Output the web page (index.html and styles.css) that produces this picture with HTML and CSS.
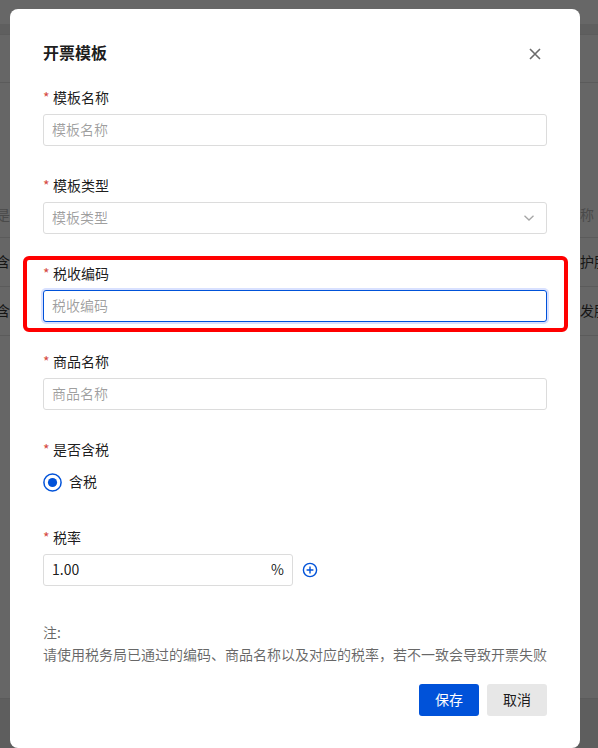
FILE: index.html
```html
<!DOCTYPE html>
<html lang="zh-CN">
<head>
<meta charset="utf-8">
<title>开票模板</title>
<link rel="stylesheet" href="styles.css">
</head>
<body>
<div class="page">
  <div class="bg-top"></div>
  <div class="bg-head"></div>
  <div class="bg-row h48"></div>
  <div class="bg-row h155"><span class="bg-l muted">是</span><span class="bg-r muted">称</span></div>
  <div class="bg-row h49"><span class="bg-l">含</span><span class="bg-r">护服</span></div>
  <div class="bg-row h49"><span class="bg-l">含</span><span class="bg-r">发服</span></div>
  <div class="bg-row h364"></div>
  <div class="bg-rest"></div>
</div>

<div class="dialog">
  <div class="dialog-header">
    <h2 class="dialog-title">开票模板</h2>
    <button class="dialog-close" aria-label="关闭">
      <svg width="12" height="12" viewBox="0 0 12 12"><path d="M1 1L11 11M11 1L1 11" stroke="#6b6b6b" stroke-width="1.6" fill="none"/></svg>
    </button>
  </div>

  <form class="form">
    <div class="form-item">
      <label class="form-label"><span class="req">*</span>模板名称</label>
      <div class="input"><span class="placeholder">模板名称</span></div>
    </div>

    <div class="form-item">
      <label class="form-label"><span class="req">*</span>模板类型</label>
      <div class="input select"><span class="placeholder">模板类型</span>
        <svg class="chevron" width="12" height="8" viewBox="0 0 12 8"><path d="M1.5 1.8L6 6L10.5 1.8" stroke="#a6a6a6" stroke-width="1.3" fill="none"/></svg>
      </div>
    </div>

    <div class="form-item highlighted">
      <label class="form-label"><span class="req">*</span>税收编码</label>
      <div class="input focused"><span class="placeholder">税收编码</span></div>
    </div>

    <div class="form-item">
      <label class="form-label"><span class="req">*</span>商品名称</label>
      <div class="input"><span class="placeholder">商品名称</span></div>
    </div>

    <div class="form-item">
      <label class="form-label"><span class="req">*</span>是否含税</label>
      <div class="radio-row">
        <span class="radio">
          <svg width="19" height="19" viewBox="0 0 19 19"><circle cx="9.5" cy="9.5" r="8.6" fill="#fff" stroke="#0052d9" stroke-width="1.5"/><circle cx="9.5" cy="9.5" r="4.6" fill="#0052d9"/></svg>
        </span>
        <span class="radio-label">含税</span>
      </div>
    </div>

    <div class="form-item last">
      <label class="form-label"><span class="req">*</span>税率</label>
      <div class="rate-row">
        <div class="input rate"><span class="value">1.00</span><span class="suffix">%</span></div>
        <svg class="add" width="16" height="16" viewBox="0 0 16 16"><circle cx="8" cy="8" r="6.6" fill="none" stroke="#0052d9" stroke-width="1.4"/><path d="M8 4.6V11.4M4.6 8H11.4" stroke="#0052d9" stroke-width="1.4"/></svg>
      </div>
    </div>
  </form>

  <div class="note">
    <p>注:</p>
    <p>请使用税务局已通过的编码、商品名称以及对应的税率，若不一致会导致开票失败</p>
  </div>

  <div class="dialog-footer">
    <button class="btn primary">保存</button>
    <button class="btn secondary">取消</button>
  </div>
</div>
</body>
</html>
```

FILE: styles.css
```css
* { box-sizing: border-box; }
html, body {
  margin: 0;
  padding: 0;
  width: 598px;
  height: 748px;
  overflow: hidden;
  font-family: "Noto Sans CJK SC", "Microsoft YaHei", sans-serif;
  font-size: 14px;
  color: rgba(0,0,0,.9);
}

/* dimmed page behind the dialog */
.page {
  display: flex;
  flex-direction: column;
  height: 748px;
  background: #666;
}
.bg-top { height: 24px; background: #676767; flex: none; }
.bg-head { height: 11px; background: #5f5f5f; flex: none; border-bottom: 1px solid #5c5c5c; }
.bg-row {
  flex: none;
  display: flex;
  justify-content: space-between;
  align-items: flex-end;
  border-bottom: 1px solid #5b5b5b;
  color: #151515;
  font-size: 14px;
  line-height: 20px;
}
.h48 { height: 48px; }
.h155 { height: 155px; padding-bottom: 13px; }
.h49 { height: 49px; padding-bottom: 15px; }
.h364 { height: 363px; }
.bg-rest { flex: 1; background: #5e5e5e; }
.bg-l { margin-left: -4px; }
.bg-r { width: 18px; overflow: hidden; white-space: nowrap; }
.muted { color: #4a4a4a; }

/* dialog */
.dialog {
  position: fixed;
  left: 10px;
  top: 9px;
  width: 570px;
  background: #fff;
  border-radius: 8px;
  padding: 32px 33px 32px;
}
.dialog-header {
  display: flex;
  justify-content: space-between;
  align-items: center;
  height: 24px;
}
.dialog-title {
  margin: 0;
  font-size: 16px;
  line-height: 22px;
  height: 24px;
  font-weight: 700;
  color: rgba(0,0,0,.9);
}
.dialog-close {
  width: 24px;
  height: 24px;
  border: 0;
  padding: 0;
  background: transparent;
  display: flex;
  align-items: center;
  justify-content: center;
  margin-top: 2px;
}

.form { margin-top: 21px; }
.form-item { margin-bottom: 28px; position: relative; }
.form-item.last { margin-bottom: 35px; }
.form-label {
  display: block;
  line-height: 22px;
  height: 24px;
  margin-bottom: 4px;
  font-size: 14px;
  color: rgba(0,0,0,.9);
}
.req {
  display: inline-block;
  width: 10px;
  color: #d54941;
}

.input {
  height: 32px;
  border: 1px solid #dcdcdc;
  border-radius: 3px;
  padding: 0 8px 2px;
  display: flex;
  align-items: center;
  background: #fff;
  line-height: 22px;
}
.placeholder { color: rgba(0,0,0,.38); }
.select { justify-content: space-between; padding-right: 11px; }
.chevron { display: block; margin-top: 2px; }
.input.focused {
  border-color: #0052d9;
  box-shadow: 0 0 0 2px #d9e1ff;
}

.highlighted::before {
  content: "";
  position: absolute;
  left: -20px;
  right: -21px;
  top: -6px;
  bottom: -10px;
  border: 4px solid #f00;
  border-radius: 6px;
  pointer-events: none;
}

.radio-row {
  height: 32px;
  display: flex;
  align-items: center;
}
.radio { display: flex; width: 19px; height: 19px; }
.radio-label { margin-left: 7px; line-height: 22px; padding-bottom: 2px; }

.rate-row {
  display: flex;
  align-items: center;
}
.input.rate {
  width: 250px;
  justify-content: space-between;
}
.value { color: rgba(0,0,0,.9); }
.suffix { color: rgba(0,0,0,.9); }
.add { margin-left: 9px; display: block; }

.note {
  color: rgba(0,0,0,.6);
  font-size: 14px;
  line-height: 22px;
}
.note p { margin: 0; white-space: nowrap; }

.dialog-footer {
  margin-top: 19px;
  display: flex;
  justify-content: flex-end;
  gap: 8px;
}
.btn {
  width: 60px;
  height: 32px;
  border: 0;
  border-radius: 3px;
  font-family: inherit;
  font-size: 14px;
  line-height: 22px;
  padding: 0 0 2px;
}
.primary { background: #0052d9; color: #fff; }
.secondary { background: #e7e7e7; color: rgba(0,0,0,.9); }
```
